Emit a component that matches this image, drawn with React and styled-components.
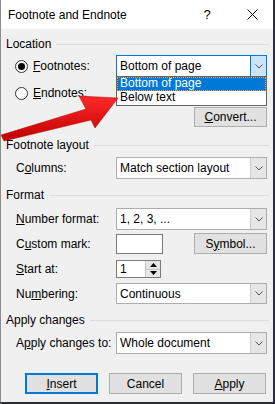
import React from 'react';
import styled, { createGlobalStyle } from 'styled-components';

const GlobalStyle = createGlobalStyle`
  body {
    margin: 0;
    background: #ffffff;
    font-family: "Liberation Sans", Arial, sans-serif;
    font-size: 12px;
    color: #000;
  }
  * { box-sizing: border-box; }
`;

const Dialog = styled.div`
  position: relative;
  width: 275px;
  height: 404px;
  background: #f0f0f0;
  border-left: 1px solid #8c8c8c;
  border-right: 2px solid #2b2b3a;
  border-bottom: 2px solid #2b2b3a;
  overflow: hidden;
`;

const TitleBar = styled.div`
  display: flex;
  align-items: center;
  height: 29px;
  padding-left: 7px;
  padding-right: 6px;
  background: #ffffff;
`;

const Title = styled.div`
  flex: 1;
  font-size: 12px;
`;

const HelpGlyph = styled.div`
  width: 20px;
  text-align: center;
  font-size: 13px;
  margin-right: 20px;
`;

const CloseBox = styled.div`
  width: 30px;
  display: flex;
  justify-content: center;
  align-items: center;
`;

const Body = styled.div`
  padding: 0 4px 0 5px;
`;

const Legend = styled.div`
  display: flex;
  align-items: center;
  gap: 5px;
  height: 16px;
  margin-top: ${(p) => p.$mt}px;

  &::after {
    content: '';
    flex: 1;
    height: 1px;
    background: #dcdcdc;
  }
`;

const Row = styled.div`
  display: grid;
  grid-template-columns: 100px 151px;
  align-items: center;
  height: ${(p) => p.$h}px;
  margin-top: ${(p) => p.$mt}px;
  padding-left: 10px;
`;

const Label = styled.div`
  white-space: nowrap;
`;

const RadioLabel = styled.div`
  display: flex;
  align-items: center;
  gap: 5px;
  margin-left: -1px;
`;

const Radio = styled.span`
  width: 13px;
  height: 13px;
  border-radius: 50%;
  border: 1px solid #333;
  background: #fff;
  display: flex;
  align-items: center;
  justify-content: center;

  &::after {
    content: '';
    width: 7px;
    height: 7px;
    border-radius: 50%;
    background: ${(p) => (p.$checked ? '#000' : 'transparent')};
  }
`;

const Combo = styled.div`
  position: relative;
  display: flex;
  height: 100%;
  background: #fff;
  border: 1px solid ${(p) => (p.$open ? '#0078d7' : '#adadad')};
`;

const ComboText = styled.div`
  flex: 1;
  display: flex;
  align-items: center;
  padding-left: 3px;
`;

const ComboButton = styled.div`
  width: 16px;
  display: flex;
  align-items: center;
  justify-content: center;
  background: ${(p) => (p.$open ? '#cce4f7' : '#e6e6e6')};
  border-left: 1px solid ${(p) => (p.$open ? '#0078d7' : '#cccccc')};
`;

const DropList = styled.div`
  position: absolute;
  top: 100%;
  left: -1px;
  right: -1px;
  background: #fff;
  border: 1px solid #646464;
  padding: 0;
  z-index: 2;
`;

const DropItem = styled.div`
  height: 14px;
  line-height: 13px;
  padding-left: 3px;
  background: ${(p) => (p.$active ? '#0078d7' : '#fff')};
  color: ${(p) => (p.$active ? '#fff' : '#000')};
  outline: ${(p) => (p.$active ? '1px dotted #f0a040' : 'none')};
  outline-offset: -1px;
`;

const ButtonCell = styled.div`
  grid-column: 2;
  display: flex;
  justify-content: flex-end;
  height: 100%;
`;

const Button = styled.div`
  width: 73px;
  height: ${(p) => p.$h || 20}px;
  display: flex;
  align-items: center;
  justify-content: center;
  background: #e1e1e1;
  border: ${(p) => (p.$default ? '2px solid #0078d7' : '1px solid #adadad')};
`;

const ControlCell = styled.div`
  display: flex;
  align-items: center;
  justify-content: space-between;
  height: 100%;
`;

const TextBox = styled.div`
  width: 47px;
  height: 20px;
  background: #fff;
  border: 1px solid #7a7a7a;
`;

const Spin = styled.div`
  display: flex;
  width: 45px;
  height: 18px;
  background: #fff;
  border: 1px solid #7a7a7a;
`;

const SpinText = styled.div`
  flex: 1;
  display: flex;
  align-items: center;
  padding-left: 3px;
`;

const SpinButtons = styled.div`
  width: 15px;
  display: flex;
  flex-direction: column;
  border-left: 1px solid #c8c8c8;
`;

const SpinHalf = styled.div`
  flex: 1;
  display: flex;
  align-items: center;
  justify-content: center;
  background: #e6e6e6;
  border-top: ${(p) => (p.$bottom ? '1px solid #c8c8c8' : 'none')};
`;

const Footer = styled.div`
  display: flex;
  gap: 11px;
  padding-left: 19px;
  margin-top: 19px;
`;

const Arrow = styled.svg`
  position: absolute;
  left: 0;
  top: 0;
  pointer-events: none;
  z-index: 3;
`;

const Chevron = () => (
  <svg width="8" height="5" viewBox="0 0 8 5">
    <path d="M0.5 0.5 L4 4 L7.5 0.5" fill="none" stroke="#555" strokeWidth="1" />
  </svg>
);

const ComboBox = ({ value, open, children }) => (
  <Combo $open={open}>
    <ComboText>{value}</ComboText>
    <ComboButton $open={open}>
      <Chevron />
    </ComboButton>
    {children}
  </Combo>
);

const App = () => {
  return (
    <>
      <GlobalStyle />
      <Dialog>
        <TitleBar>
          <Title>Footnote and Endnote</Title>
          <HelpGlyph>?</HelpGlyph>
          <CloseBox>
            <svg width="11" height="11" viewBox="0 0 11 11">
              <path d="M0.5 0.5 L10.5 10.5 M10.5 0.5 L0.5 10.5" stroke="#000" strokeWidth="1" />
            </svg>
          </CloseBox>
        </TitleBar>
        <Body>
          <Legend $mt={7}>Location</Legend>
          <Row $h={22} $mt={3}>
            <RadioLabel>
              <Radio $checked />
              <span><u>F</u>ootnotes:</span>
            </RadioLabel>
            <ComboBox value="Bottom of page" open>
              <DropList>
                <DropItem $active>Bottom of page</DropItem>
                <DropItem>Below text</DropItem>
              </DropList>
            </ComboBox>
          </Row>
          <Row $h={22} $mt={5}>
            <RadioLabel>
              <Radio />
              <span><u>E</u>ndnotes:</span>
            </RadioLabel>
          </Row>
          <Row $h={20} $mt={3}>
            <ButtonCell>
              <Button><span><u>C</u>onvert...</span></Button>
            </ButtonCell>
          </Row>

          <Legend $mt={10}>Footnote layout</Legend>
          <Row $h={22} $mt={4}>
            <Label>C<u>o</u>lumns:</Label>
            <ComboBox value="Match section layout" />
          </Row>

          <Legend $mt={8}>Format</Legend>
          <Row $h={22} $mt={5}>
            <Label><u>N</u>umber format:</Label>
            <ComboBox value="1, 2, 3, ..." />
          </Row>
          <Row $h={21} $mt={3}>
            <Label>C<u>u</u>stom mark:</Label>
            <ControlCell>
              <TextBox />
              <Button $h={21}><span>S<u>y</u>mbol...</span></Button>
            </ControlCell>
          </Row>
          <Row $h={18} $mt={6}>
            <Label><u>S</u>tart at:</Label>
            <ControlCell>
              <Spin>
                <SpinText>1</SpinText>
                <SpinButtons>
                  <SpinHalf>
                    <svg width="7" height="4" viewBox="0 0 7 4"><path d="M3.5 0 L7 4 L0 4 Z" fill="#000" /></svg>
                  </SpinHalf>
                  <SpinHalf $bottom>
                    <svg width="7" height="4" viewBox="0 0 7 4"><path d="M0 0 L7 0 L3.5 4 Z" fill="#000" /></svg>
                  </SpinHalf>
                </SpinButtons>
              </Spin>
            </ControlCell>
          </Row>
          <Row $h={21} $mt={5}>
            <Label>Nu<u>m</u>bering:</Label>
            <ComboBox value="Continuous" />
          </Row>

          <Legend $mt={8}>Apply changes</Legend>
          <Row $h={22} $mt={4}>
            <Label>A<u>p</u>ply changes to:</Label>
            <ComboBox value="Whole document" />
          </Row>

          <Footer>
            <Button $default $h={21}><span><u>I</u>nsert</span></Button>
            <Button $h={21}>Cancel</Button>
            <Button $h={21}><span><u>A</u>pply</span></Button>
          </Footer>
        </Body>
        <Arrow width="275" height="404" viewBox="0 0 275 404">
          <defs>
            <linearGradient id="arrowFill" x1="0" y1="0" x2="0" y2="1">
              <stop offset="0" stopColor="#ff2a2a" />
              <stop offset="1" stopColor="#c00000" />
            </linearGradient>
          </defs>
          <path
            d="M0 135 L85 109 L78 96 L117 98 L94 128 L90 120 L3 141 Z"
            fill="url(#arrowFill)"
            stroke="#b00000"
            strokeWidth="0.5"
          />
        </Arrow>
      </Dialog>
    </>
  );
};

export default App;
